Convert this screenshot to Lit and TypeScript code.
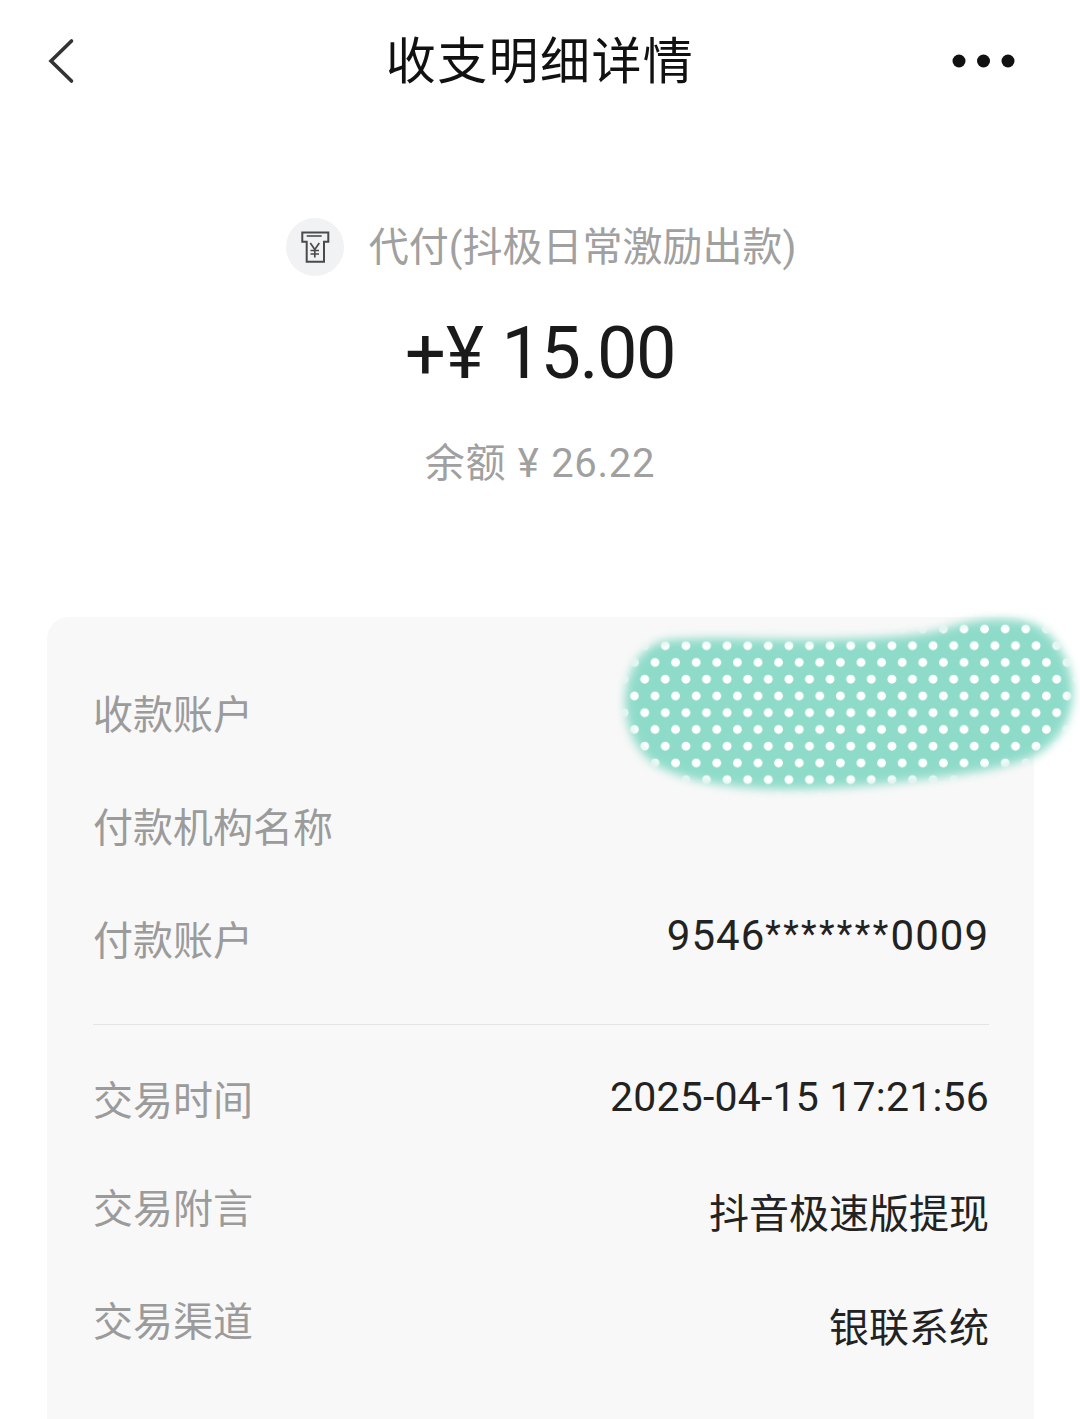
import { LitElement, html, css, svg } from "lit";
import { customElement } from "lit/decorators.js";

type Row = { label: string; value?: string; shift?: string };

const groupA: Row[] = [
  { label: "收款账户", shift: "r-a" },
  { label: "付款机构名称", shift: "r-a" },
  { label: "付款账户", value: "9546*******0009", shift: "r-a acct" },
];
const groupB: Row[] = [
  { label: "交易时间", value: "2025-04-15 17:21:56", shift: "r-b date" },
  { label: "交易附言", value: "抖音极速版提现", shift: "r-c" },
  { label: "交易渠道", value: "银联系统", shift: "r-d" },
];

const BLOB =
  "M625 702C626 670 640 646 667 640C710 636 770 640 830 639C880 638 925 636 950 627C975 618 1010 617 1032 623C1055 632 1072 662 1073 690C1073 722 1056 746 1030 758C1000 770 960 775 910 781C860 787 800 792 750 788C700 784 665 774 648 759C632 744 625 722 625 702Z";

@customElement("app-root")
export class AppRoot extends LitElement {
  static styles = css`
    :host {
      display: block;
      position: relative;
      width: 1080px;
      height: 1419px;
      overflow: hidden;
      background: #fff;
      font-family: Roboto, "Noto Sans CJK SC", sans-serif;
    }
    .page { display: flex; flex-direction: column; height: 100%; }
    .nav {
      flex: none;
      height: 122px;
      display: grid;
      grid-template-columns: 1fr auto 1fr;
      align-items: center;
      padding: 0 46px;
    }
    .nav svg { display: block; }
    .more { justify-self: end; margin-right: 18px; }
    .title {
      font-size: 50px;
      line-height: 122px;
      color: #111;
      letter-spacing: 1.4px;
      position: relative;
      top: 1px;
    }
    .summary {
      flex: none;
      display: flex;
      flex-direction: column;
      align-items: center;
      padding-top: 96px;
      height: 495px;
      box-sizing: border-box;
    }
    .source {
      display: flex;
      align-items: center;
      gap: 25px;
      height: 58px;
      font-size: 40px;
      color: #a0a0a0;
      margin-left: 2px;
    }
    .source span { position: relative; top: -3px; }
    .badge { flex: none; width: 58px; height: 58px; display: block; }
    .amount {
      margin-top: 33px;
      font-size: 72px;
      line-height: 90px;
      color: #1a1a1a;
      white-space: pre;
    }
    .amount .num { letter-spacing: -1.5px; }
    .balance {
      margin-top: 40px;
      font-size: 40px;
      line-height: 50px;
      color: #a0a0a0;
      letter-spacing: 0.7px;
      word-spacing: 1px;
    }
    .card {
      flex: 1;
      margin: 0 46px 0 47px;
      background: #f8f8f8;
      border-radius: 22px 22px 0 0;
      padding: 71px 45px 0 46px;
    }
    .row {
      display: flex;
      justify-content: space-between;
      align-items: flex-start;
      height: 113px;
      font-size: 40px;
      line-height: 56px;
    }
    .label { color: #9b9b9b; }
    .value { color: #222; }
    .r-a .value { transform: translateY(-6px); }
    .r-b .value { transform: translateY(-5px); }
    .r-c .value { transform: translateY(5px); }
    .r-d .value { transform: translateY(6px); }
    .acct .value { font-size: 42px; letter-spacing: 1px; }
    .stars {
      font-size: 36px;
      letter-spacing: 2.4px;
      position: relative;
      top: -4px;
    }
    .date .value { font-size: 41px; letter-spacing: 0.2px; }
    .r-b { height: 108px; }
    .divider { height: 1px; background: #e4e4e4; margin: -3px 0 49px; }
    .mask { position: absolute; left: 0; top: 0; pointer-events: none; }
  `;

  private renderValue(value: string) {
    const m = value.match(/^(\d+)(\*+)(\d+)$/);
    if (!m) return value;
    return html`${m[1]}<span class="stars">${m[2]}</span>${m[3]}`;
  }

  private row(r: Row) {
    return html`<div class="row ${r.shift ?? ""}">
      <span class="label">${r.label}</span>
      ${r.value ? html`<span class="value">${this.renderValue(r.value)}</span>` : null}
    </div>`;
  }

  render() {
    return html`
      <div class="page">
        <header class="nav">
          <svg width="30" height="46" viewBox="0 0 30 46" fill="none">
            <path d="M25.5 3 L5 23 L25.5 43" stroke="#333" stroke-width="3.6" stroke-linecap="round" stroke-linejoin="miter" />
          </svg>
          <div class="title">收支明细详情</div>
          <svg class="more" width="64" height="16" viewBox="0 0 64 16" fill="#111">
            <circle cx="7" cy="8" r="6.5" /><circle cx="31.5" cy="8" r="6.5" /><circle cx="56" cy="8" r="6.5" />
          </svg>
        </header>
        <section class="summary">
          <div class="source">
            <svg class="badge" viewBox="0 0 58 58" fill="none">
              <circle cx="29" cy="29" r="29" fill="#f1f2f4" />
              <g stroke="#4a4a4a" stroke-width="2" stroke-linejoin="miter">
                <path d="M16.3 14.5H42.3V23.7H38V43.7H20.7V23.7H16.3Z" />
                <path d="M20.7 18H35.7" stroke-width="1.6" />
                <path d="M24.3 25L28.8 31.5L33.3 25M28.8 31.5V39.5M24.5 32.5H33M24.5 36H33" stroke-width="1.7" />
              </g>
            </svg>
            <span>代付(抖极日常激励出款)</span>
          </div>
          <div class="amount">+¥ <span class="num">15.00</span></div>
          <div class="balance">余额 ¥ 26.22</div>
        </section>
        <section class="card">
          ${groupA.map((r) => this.row(r))}
          <div class="divider"></div>
          ${groupB.map((r) => this.row(r))}
        </section>
      </div>
      <svg class="mask" width="1080" height="1419" viewBox="0 0 1080 1419">
        ${svg`
          <defs>
            <filter id="soft" x="-5%" y="-15%" width="110%" height="130%">
              <feGaussianBlur stdDeviation="5" />
            </filter>
            <pattern id="dots" patternUnits="userSpaceOnUse" x="644.7" y="645.5" width="20.6" height="33.5">
              <circle cx="0" cy="0.2" r="4.4" fill="#fff" />
              <circle cx="20.6" cy="0.2" r="4.4" fill="#fff" />
              <circle cx="10.3" cy="16.95" r="4.4" fill="#fff" />
              <circle cx="0" cy="33.7" r="4.4" fill="#fff" />
              <circle cx="20.6" cy="33.7" r="4.4" fill="#fff" />
            </pattern>
            <mask id="blobMask" maskUnits="userSpaceOnUse" x="600" y="600" width="480" height="210">
              <path d="${BLOB}" fill="#fff" filter="url(#soft)" />
            </mask>
          </defs>
          <path d="${BLOB}" fill="#8fdbca" filter="url(#soft)" />
          <rect x="600" y="600" width="480" height="210" fill="url(#dots)" mask="url(#blobMask)" />
        `}
      </svg>
    `;
  }
}
